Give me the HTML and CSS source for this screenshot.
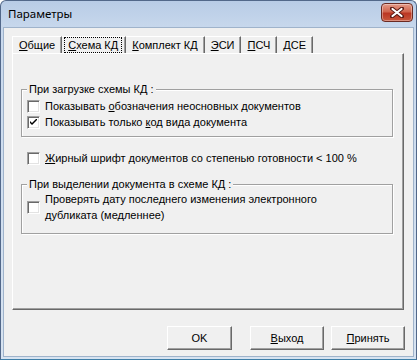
FILE: index.html
```html
<!DOCTYPE html>
<html lang="ru">

<head>
    <meta charset="UTF-8">
    <title>Параметры</title>
    <link rel="stylesheet" href="styles.css">
</head>

<body>
    <div class="window">
        <div class="titlebar">
            <span class="title">Параметры</span>
            <div class="close-btn">
                <svg width="14" height="11" viewBox="0 0 14 11">
                    <path d="M2 1.5 L12 9.5 M12 1.5 L2 9.5" stroke="#5a1a14" stroke-width="4" stroke-linecap="round" fill="none"/>
                    <path d="M2.5 2 L11.5 9 M11.5 2 L2.5 9" stroke="#fff" stroke-width="2.2" stroke-linecap="round" fill="none"/>
                </svg>
            </div>
        </div>

        <div class="client">
            <div class="tabs">
                <div class="tab"><u>О</u>бщие</div>
                <div class="tab active"><span class="focus"><u>С</u>хема КД</span></div>
                <div class="tab"><u>К</u>омплект КД</div>
                <div class="tab"><u>Э</u>СИ</div>
                <div class="tab"><u>П</u>СЧ</div>
                <div class="tab"><u>Д</u>СЕ</div>
            </div>

            <div class="panel">
                <div class="group">
                    <div class="group-title">При загрузке схемы КД :</div>
                    <div class="check-row">
                        <span class="checkbox"></span>
                        <span>Показывать <u>о</u>бозначения неосновных документов</span>
                    </div>
                    <div class="check-row">
                        <span class="checkbox">
                            <svg width="7" height="7" viewBox="0 0 7 7">
                                <path d="M0 2 L0 4 L2 6 L7 1 L7 -1 L2 4 Z" fill="#000"/>
                            </svg>
                        </span>
                        <span>Показывать только <u>к</u>од вида документа</span>
                    </div>
                </div>

                <div class="check-row single">
                    <span class="checkbox"></span>
                    <span><u>Ж</u>ирный шрифт документов со степенью готовности &lt; 100 %</span>
                </div>

                <div class="group second">
                    <div class="group-title">При выделении документа в схеме КД :</div>
                    <div class="check-row multi">
                        <span class="checkbox"></span>
                        <span>Проверять <u>д</u>ату последнего изменения электронного<br>дубликата (медленнее)</span>
                    </div>
                </div>
            </div>

            <div class="buttons">
                <div class="btn btn-ok">OK</div>
                <div class="btn btn-exit"><u>В</u>ыход</div>
                <div class="btn btn-apply"><u>П</u>ринять</div>
            </div>
        </div>
    </div>
</body>

</html>
```

FILE: styles.css
```css
body {
    margin: 0;
    padding: 0;
    font-family: 'Liberation Sans', Arial, sans-serif;
    font-size: 11px;
    color: #000;
    background-color: #fff;
}

.window {
    box-sizing: border-box;
    width: 417px;
    height: 360px;
    border: 1px solid #52688a;
    border-bottom-color: #3f7fa8;
    border-radius: 6px 6px 0 0;
    background: linear-gradient(#b8cce6, #c9d9ed 30px, #d7e3f1);
    display: flex;
    flex-direction: column;
    overflow: hidden;
}

.titlebar {
    height: 26px;
    display: flex;
    align-items: center;
    justify-content: space-between;
    padding: 0 3px 0 7px;
}

.title {
    font-family: 'Noto Sans', sans-serif;
    font-size: 11.5px;
    color: #000;
    margin-top: -1px;
}

.close-btn {
    width: 32px;
    height: 19px;
    box-sizing: border-box;
    margin-top: -4px;
    border: 1px solid #6b2a22;
    border-radius: 4px;
    background: linear-gradient(#e49a88, #d0654e 45%, #bb3623 55%, #c9573c);
    box-shadow: inset 0 0 0 1px rgba(255, 255, 255, 0.35);
    display: flex;
    align-items: center;
    justify-content: center;
}

.client {
    flex: 1;
    margin: 0 2px 2px 2px;
    border: 1px solid #9fb3cb;
    background-color: #f0f0f0;
    padding: 8px 8px 0 8px;
    display: flex;
    flex-direction: column;
}

.tabs {
    display: flex;
    height: 17px;
}

.tab {
    box-sizing: border-box;
    height: 17px;
    padding: 0 6px 0 6px;
    line-height: 16px;
    border-top: 1px solid #fff;
    border-right: 1px solid #696969;
    box-shadow: inset -1px 0 0 #a0a0a0;
}

.tab:first-child {
    border-left: 1px solid #fff;
}

.tab.active {
    padding: 0 3px 0 2px;
}

.focus {
    display: inline-block;
    padding: 0 3px;
    line-height: 14px;
    margin-top: -1px;
    border: 1px dotted #000;
}

.panel {
    box-sizing: border-box;
    width: 392px;
    height: 257px;
    border-top: 1px solid #fff;
    border-left: 1px solid #fff;
    border-right: 1px solid #696969;
    border-bottom: 1px solid #696969;
    box-shadow: inset -1px -1px 0 #a0a0a0;
    padding: 35px 8px 0 8px;
}

.group {
    border: 1px solid #a0a0a0;
    box-shadow: 1px 1px 0 #fff, inset 1px 1px 0 #fff;
    padding: 0 0 6px 5px;
    width: 372px;
    box-sizing: border-box;
}

.group.second {
    margin-top: 18px;
    padding-bottom: 10px;
}

.group-title {
    width: fit-content;
    margin: -7px 0 2px 0;
    padding: 0 2px;
    line-height: 13px;
    background-color: #f0f0f0;
}

.group.second .group-title {
    margin-bottom: 0;
}

.check-row {
    display: flex;
    align-items: center;
    height: 16px;
    line-height: 16px;
}

.check-row.single {
    margin: 13px 0 0 6px;
}

.check-row.multi {
    height: 32px;
}

.checkbox {
    box-sizing: border-box;
    width: 13px;
    height: 13px;
    margin-right: 5px;
    flex-shrink: 0;
    border-top: 1px solid #a0a0a0;
    border-left: 1px solid #a0a0a0;
    border-right: 1px solid #fff;
    border-bottom: 1px solid #fff;
    background-color: #fff;
    box-shadow: inset 1px 1px 0 #696969, inset -1px -1px 0 #e3e3e3;
    display: flex;
    align-items: center;
    justify-content: center;
}

.buttons {
    display: flex;
    justify-content: flex-end;
    margin-top: 16px;
}

.btn {
    box-sizing: border-box;
    height: 24px;
    line-height: 22px;
    text-align: center;
    border-top: 1px solid #fff;
    border-left: 1px solid #fff;
    border-right: 1px solid #696969;
    border-bottom: 1px solid #696969;
    box-shadow: inset -1px -1px 0 #a0a0a0;
    background-color: #f0f0f0;
}

.btn-ok {
    width: 65px;
}

.btn-exit {
    width: 74px;
    margin-left: 18px;
}

.btn-apply {
    width: 74px;
    margin-left: 7px;
}
```
